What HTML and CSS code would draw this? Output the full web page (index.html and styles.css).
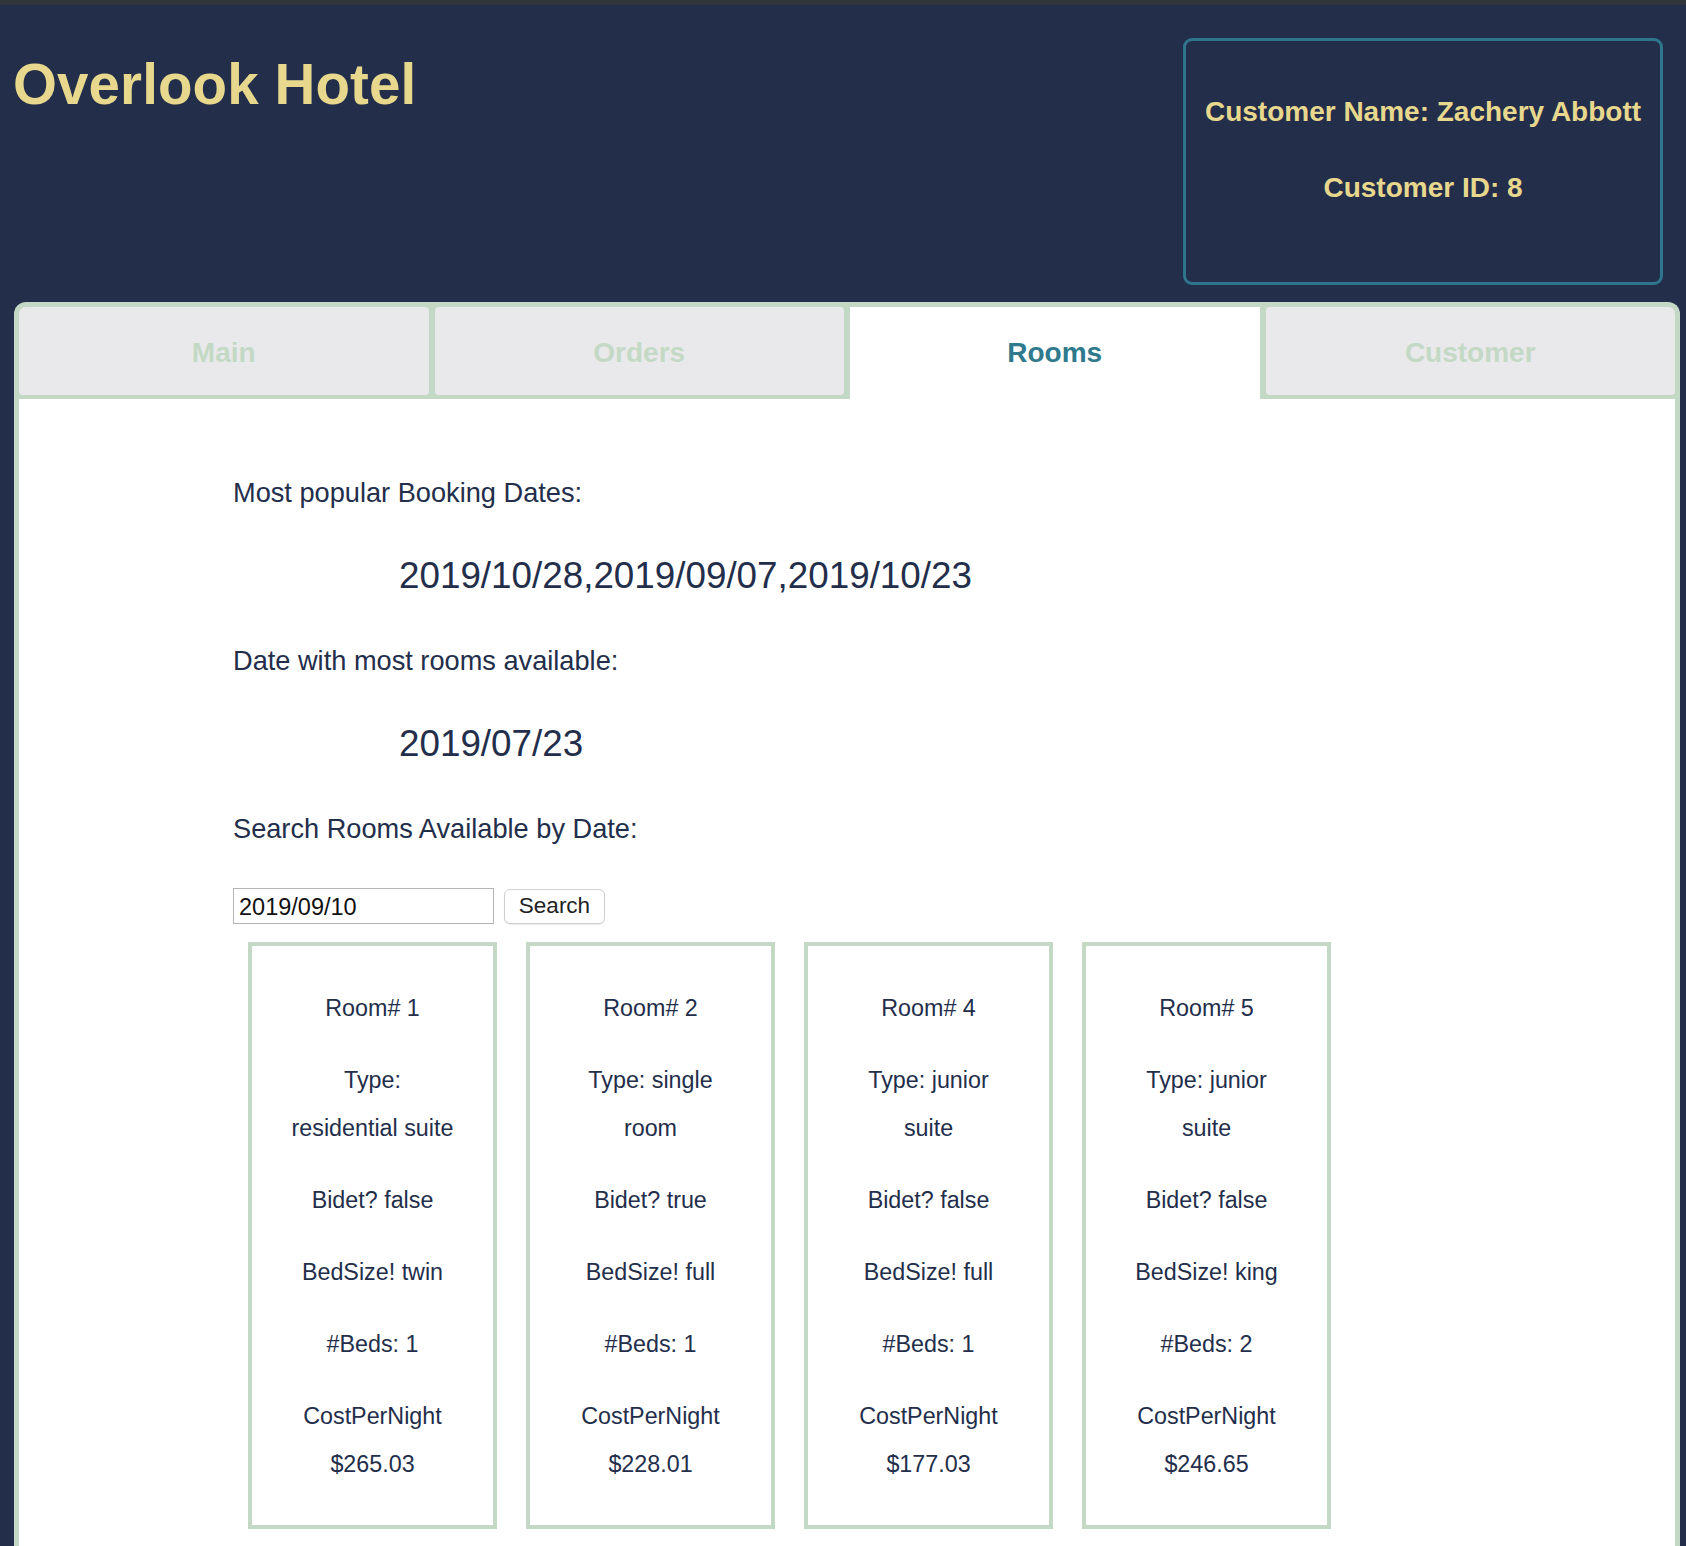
FILE: index.html
```html
<!DOCTYPE html>
<html lang="en">
<head>
<meta charset="utf-8">
<title>Overlook Hotel</title>
<link rel="stylesheet" href="styles.css">
</head>
<body>
<div class="topbar"></div>
<header class="header">
  <h1 class="title">Overlook Hotel</h1>
  <div class="customer-box">
    <p class="customer-line">Customer Name: Zachery Abbott</p>
    <p class="customer-line">Customer ID: 8</p>
  </div>
</header>
<main class="panel">
  <nav class="tabs">
    <div class="tab">Main</div>
    <div class="tab">Orders</div>
    <div class="tab tab-active">Rooms</div>
    <div class="tab">Customer</div>
  </nav>
  <section class="content">
    <p class="label">Most popular Booking Dates:</p>
    <p class="value">2019/10/28,2019/09/07,2019/10/23</p>
    <p class="label">Date with most rooms available:</p>
    <p class="value">2019/07/23</p>
    <p class="label">Search Rooms Available by Date:</p>
    <div class="search-row">
      <input class="search-input" type="text" value="2019/09/10">
      <button class="search-btn" type="button">Search</button>
    </div>
    <div class="cards">
      <div class="card">
        <p>Room# 1</p>
        <p>Type: residential suite</p>
        <p>Bidet? false</p>
        <p>BedSize! twin</p>
        <p>#Beds: 1</p>
        <p>CostPerNight $265.03</p>
      </div>
      <div class="card">
        <p>Room# 2</p>
        <p>Type: single room</p>
        <p>Bidet? true</p>
        <p>BedSize! full</p>
        <p>#Beds: 1</p>
        <p>CostPerNight $228.01</p>
      </div>
      <div class="card">
        <p>Room# 4</p>
        <p>Type: junior suite</p>
        <p>Bidet? false</p>
        <p>BedSize! full</p>
        <p>#Beds: 1</p>
        <p>CostPerNight $177.03</p>
      </div>
      <div class="card">
        <p>Room# 5</p>
        <p>Type: junior suite</p>
        <p>Bidet? false</p>
        <p>BedSize! king</p>
        <p>#Beds: 2</p>
        <p>CostPerNight $246.65</p>
      </div>
    </div>
  </section>
</main>
</body>
</html>
```

FILE: styles.css
```css
* { box-sizing: border-box; }

html, body {
  margin: 0;
  padding: 0;
  background: #232e4b;
  font-family: "Liberation Sans", Arial, Helvetica, sans-serif;
  color: #232e4b;
}

.topbar {
  height: 5px;
  background: #323539;
}

.header {
  display: flex;
  justify-content: space-between;
  align-items: flex-start;
  padding: 33px 23px 17px 13px;
}

.title {
  margin: 15px 0 0 0;
  font-size: 56.5px;
  line-height: 64px;
  font-weight: 700;
  color: #e7d88d;
  letter-spacing: 0.1px;
}

.customer-box {
  width: 480px;
  height: 247px;
  border: 3px solid #2f768c;
  border-radius: 9px;
  padding-top: 55px;
  display: flex;
  flex-direction: column;
  align-items: center;
  gap: 44px;
}

.customer-line {
  margin: 0;
  font-size: 28px;
  line-height: 32px;
  font-weight: 700;
  color: #e7d88d;
}

.panel {
  margin: 0 6px 0 14px;
  border: 5px solid #c4d9c5;
  border-bottom: none;
  border-radius: 12px 12px 0 0;
  background: #ffffff;
  overflow: hidden;
}

.tabs {
  display: flex;
  gap: 6px;
  background: #c4d9c5;
}

.tab {
  flex: 1;
  height: 88px;
  margin-bottom: 4px;
  padding-top: 4px;
  background: #e9e9eb;
  border-radius: 4px;
  display: flex;
  align-items: center;
  justify-content: center;
  font-size: 28px;
  font-weight: 700;
  color: #c4d9c5;
}

.tab-active {
  height: 92px;
  margin-bottom: 0;
  padding-top: 0;
  background: #ffffff;
  color: #2f7a8c;
  border-radius: 0;
}

.content {
  padding: 78px 0 40px 214px;
}

.label {
  margin: 0;
  font-size: 27.2px;
  line-height: 32px;
}

.value {
  margin: 46px 0 48px 166px;
  font-size: 36.8px;
  line-height: 42px;
}

.search-row {
  display: flex;
  align-items: center;
  gap: 10px;
  margin-top: 43px;
}

.search-input {
  width: 261px;
  height: 36px;
  border: 1px solid #b5b5b5;
  padding: 2px 5px 0;
  font-family: "Liberation Sans", Arial, sans-serif;
  font-size: 23.5px;
  color: #111111;
  background: #ffffff;
  outline: none;
}

.search-btn {
  width: 101px;
  height: 35px;
  border: 1px solid #cfcfcf;
  border-radius: 6px;
  background: #ffffff;
  font-family: "Liberation Sans", Arial, sans-serif;
  font-size: 22.5px;
  color: #222222;
  padding: 0;
  box-shadow: 0 1px 1px rgba(0,0,0,0.08);
}

.cards {
  display: flex;
  gap: 29px;
  margin: 18px 0 0 15px;
}

.card {
  width: 249px;
  border: 4px solid #c4d9c5;
  padding: 38px 38px 37px;
  display: flex;
  flex-direction: column;
  gap: 24px;
  text-align: center;
}

.card p {
  margin: 0;
  font-size: 23.3px;
  line-height: 48px;
}
```
